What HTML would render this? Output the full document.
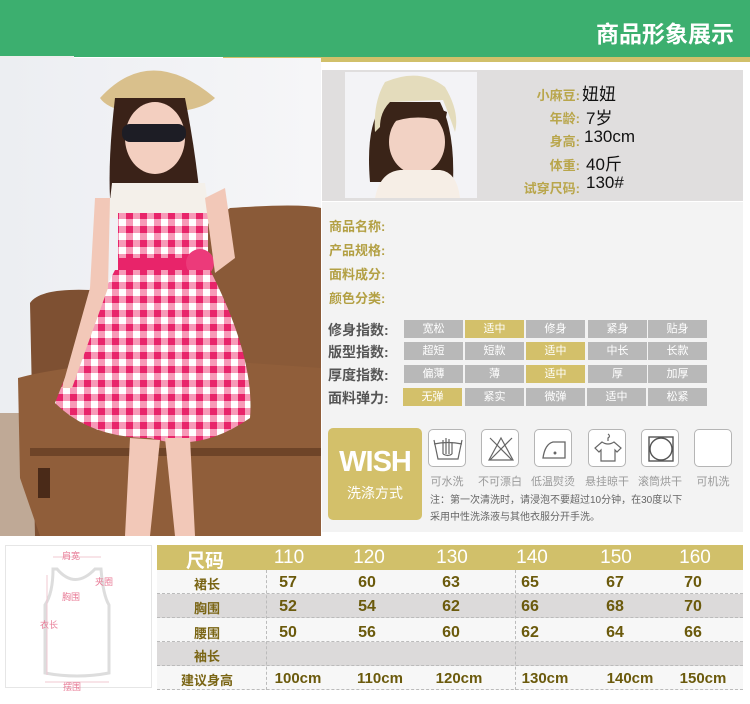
<!DOCTYPE html>
<html><head><meta charset="utf-8"><style>
*{margin:0;padding:0;box-sizing:border-box}
body{width:750px;height:704px;position:relative;background:#fff;font-family:"Liberation Sans","Noto Sans CJK SC",sans-serif;overflow:hidden}
.a{position:absolute}
.lbl{color:#b9a64c;font-weight:bold;font-size:13px;text-align:right;width:92px;left:488px}
.val{color:#111;font-size:17px;left:582px}
.pl{color:#b3a044;font-weight:bold;font-size:13px;left:329px}
.il{color:#555;font-weight:bold;font-size:14px;left:328px}
.c{height:18px;width:59px;background:#b8b8b8;color:#fff;font-size:11px;text-align:center;line-height:18px}
.c.g{background:#d3c06a}
.ic{width:38px;height:38px;border:1px solid #b5b5b5;border-radius:5px;background:#fff;top:429px}
.wl{top:473px;font-size:11px;color:#9a9a9a;width:56px;text-align:center}
.row{left:157px;width:586px;height:24px}
.rl{color:#7a6514;font-weight:bold;font-size:13px;width:100px;text-align:center;left:157px}
.rv{color:#6b5a0c;font-weight:bold;font-size:16px;width:60px;text-align:center}
.dash{border-bottom:1px dashed #bbb}
.pk{color:#e87b96;font-size:9px}
</style></head><body>
<div class="a" style="left:0;top:0;width:750px;height:57px;background:#3caf6f"></div>
<div class="a" style="left:596px;top:15px;font-size:23px;font-weight:bold;color:#fff">商品形象展示</div>
<div class="a" style="left:0;top:56px;width:74px;height:2px;background:#eee"></div>
<div class="a" style="left:223px;top:57px;width:527px;height:5px;background:#d1c06a"></div>

<svg class="a" style="left:0;top:58px" width="321" height="478" viewBox="0 0 321 478">
<defs>
<pattern id="ck" width="14" height="14" patternUnits="userSpaceOnUse"><rect width="14" height="14" fill="#fff"/><rect width="7" height="14" fill="#f79ab8"/><rect width="14" height="7" fill="#f79ab8"/><rect width="7" height="7" fill="#e8246a"/></pattern>
<linearGradient id="bg" x1="0" x2="1"><stop offset="0" stop-color="#eceef2"/><stop offset="1" stop-color="#f6f6f8"/></linearGradient>
</defs>
<rect width="321" height="478" fill="url(#bg)"/>
<rect x="0" y="355" width="321" height="123" fill="#bfa996"/>
<path d="M230 150 Q300 145 321 150 L321 478 L160 478 L160 200 Z" fill="#8a5a38"/>
<path d="M30 245 Q40 230 90 232 L160 240 L160 478 L35 478 Z" fill="#7e5032"/>
<path d="M18 320 Q90 300 250 305 L321 310 L321 478 L40 478 L20 420 Z" fill="#905e3a"/>
<rect x="30" y="390" width="291" height="8" fill="#6e4428"/>
<rect x="38" y="410" width="12" height="30" fill="#4a2a18"/>
<path d="M100 40 Q150 -15 215 40 Q200 55 150 55 Q110 55 100 40Z" fill="#d9c08c"/>
<path d="M115 40 Q108 100 110 140 L200 140 Q195 90 185 40Z" fill="#3a2218"/>
<ellipse cx="155" cy="80" rx="30" ry="36" fill="#f3cfc0"/>
<rect x="122" y="66" width="64" height="18" rx="8" fill="#1d1d25"/>
<path d="M112 125 L205 125 L210 160 L108 160Z" fill="#f4f0ea"/>
<rect x="118" y="155" width="90" height="50" fill="url(#ck)"/>
<rect x="118" y="200" width="92" height="14" fill="#e8246a"/>
<circle cx="200" cy="205" r="14" fill="#ec3a7a"/>
<path d="M115 212 L210 212 Q255 300 250 360 Q200 395 150 380 Q90 380 55 345 Q80 280 115 212Z" fill="url(#ck)"/>
<path d="M130 380 L125 478 L150 478 L160 382Z M165 380 L175 478 L195 478 L190 380Z" fill="#f2c8b8"/>
<path d="M95 140 L110 140 L108 230 L72 330 L62 330 L90 230Z" fill="#f2c8b8"/>
<path d="M205 140 L225 130 L235 200 L215 215Z" fill="#f2c8b8"/>
</svg>

<div class="a" style="left:322px;top:70px;width:421px;height:131px;background:#e0dede"></div>
<svg class="a" style="left:345px;top:72px" width="132" height="126" viewBox="0 0 132 126">
<rect width="132" height="126" fill="#f3f3f6"/>
<path d="M25 110 Q20 50 40 30 L95 30 Q110 60 108 110Z" fill="#3a2418"/>
<ellipse cx="72" cy="70" rx="28" ry="32" fill="#f2d2c4"/>
<path d="M35 55 Q35 40 45 30 L98 28 Q105 45 110 60 Q115 40 100 15 Q75 -5 40 10 Q28 30 30 60Z" fill="#e4dcbc"/>
<path d="M40 40 Q70 25 102 40 L100 50 Q70 40 42 52Z" fill="#3a2418"/>
<path d="M30 126 Q35 100 55 98 L95 98 Q112 100 115 126Z" fill="#f6eee6"/>
</svg>
<div class="a lbl" style="top:85px">小麻豆:</div><div class="a val" style="top:80px">妞妞</div>
<div class="a lbl" style="top:108px">年龄:</div><div class="a val" style="top:104px;left:586px">7岁</div>
<div class="a lbl" style="top:131px">身高:</div><div class="a val" style="top:127px;left:584px">130cm</div>
<div class="a lbl" style="top:155px">体重:</div><div class="a val" style="top:150px;left:586px">40斤</div>
<div class="a lbl" style="top:178px">试穿尺码:</div><div class="a val" style="top:173px;left:586px">130#</div>

<div class="a" style="left:322px;top:202px;width:421px;height:330px;background:#f3f3f3"></div>
<div class="a pl" style="top:216px">商品名称:</div>
<div class="a pl" style="top:240px">产品规格:</div>
<div class="a pl" style="top:264px">面料成分:</div>
<div class="a pl" style="top:288px">颜色分类:</div>

<div class="a il" style="top:320px">修身指数:</div>
<div class="a il" style="top:342px">版型指数:</div>
<div class="a il" style="top:365px">厚度指数:</div>
<div class="a il" style="top:388px">面料弹力:</div>

<div class="a c" style="left:404px;top:320px">宽松</div><div class="a c g" style="left:465px;top:320px">适中</div><div class="a c" style="left:526px;top:320px">修身</div><div class="a c" style="left:588px;top:320px">紧身</div><div class="a c" style="left:648px;top:320px">贴身</div>
<div class="a c" style="left:404px;top:342px">超短</div><div class="a c" style="left:465px;top:342px">短款</div><div class="a c g" style="left:526px;top:342px">适中</div><div class="a c" style="left:588px;top:342px">中长</div><div class="a c" style="left:648px;top:342px">长款</div>
<div class="a c" style="left:404px;top:365px">偏薄</div><div class="a c" style="left:465px;top:365px">薄</div><div class="a c g" style="left:526px;top:365px">适中</div><div class="a c" style="left:588px;top:365px">厚</div><div class="a c" style="left:648px;top:365px">加厚</div>
<div class="a c g" style="left:403px;top:388px">无弹</div><div class="a c" style="left:465px;top:388px">紧实</div><div class="a c" style="left:526px;top:388px">微弹</div><div class="a c" style="left:587px;top:388px">适中</div><div class="a c" style="left:648px;top:388px">松紧</div>

<div class="a" style="left:328px;top:428px;width:94px;height:92px;background:#d3c06a;border-radius:5px"></div>
<div class="a" style="left:328px;top:446px;width:94px;text-align:center;color:#fff;font-weight:bold;font-size:29px;letter-spacing:-1px">WISH</div>
<div class="a" style="left:328px;top:483px;width:94px;text-align:center;color:#fff;font-size:14px">洗涤方式</div>

<div class="a ic" style="left:428px"><svg width="38" height="38" viewBox="0 0 38 38" fill="none" stroke="#666" stroke-width="1.2"><path d="M5 10 L9 29 L29 29 L33 10 M5 14 Q19 11 33 14"/><path d="M14 24 L14 10 M17 24 L17 8 M20 24 L20 9 M23 24 L23 12 M14 24 Q19 27 23 24"/></svg></div>
<div class="a ic" style="left:481px"><svg width="38" height="38" viewBox="0 0 38 38" fill="none" stroke="#666" stroke-width="1.2"><path d="M19 8 L31 30 L7 30Z M8 8 L30 30 M30 8 L8 30"/></svg></div>
<div class="a ic" style="left:534px"><svg width="38" height="38" viewBox="0 0 38 38" fill="none" stroke="#666" stroke-width="1.3"><path d="M8 28 L30 28 L30 12 L18 12 Q10 14 8 28Z"/><circle cx="20" cy="23" r="0.8" fill="#666"/></svg></div>
<div class="a ic" style="left:588px"><svg width="38" height="38" viewBox="0 0 38 38" fill="none" stroke="#666" stroke-width="1.2"><path d="M19 4 Q22 6 19 8 L19 11 M13 12 L6 18 L10 22 L12 20 L12 31 L26 31 L26 20 L28 22 L32 18 L25 12 Q19 16 13 12Z"/></svg></div>
<div class="a ic" style="left:641px"><svg width="38" height="38" viewBox="0 0 38 38" fill="none" stroke="#555" stroke-width="1.4"><rect x="7" y="7" width="24" height="24"/><circle cx="19" cy="19" r="11"/></svg></div>
<div class="a ic" style="left:694px"></div>
<div class="a wl" style="left:419px">可水洗</div>
<div class="a wl" style="left:472px">不可漂白</div>
<div class="a wl" style="left:525px">低温熨烫</div>
<div class="a wl" style="left:579px">悬挂晾干</div>
<div class="a wl" style="left:632px">滚筒烘干</div>
<div class="a wl" style="left:685px">可机洗</div>
<div class="a" style="left:430px;top:492px;font-size:10px;color:#666;line-height:17px">注：第一次清洗时，请浸泡不要超过10分钟，在30度以下<br>采用中性洗涤液与其他衣服分开手洗。</div>

<div class="a" style="left:5px;top:545px;width:147px;height:143px;background:#fff;border:1px solid #e6e6e6"></div>
<svg class="a" style="left:5px;top:545px" width="147" height="143" viewBox="0 0 147 143">
<path d="M52 24 Q70 45 90 24 L96 24 Q98 50 104 60 L104 128 Q72 134 40 128 L40 60 Q48 48 48 24Z" fill="none" stroke="#ddd" stroke-width="3"/>
<path d="M48 12 L96 12 M42 30 L42 130 M40 137 L104 137" stroke="#f0c8d2" stroke-width="1"/>
</svg>
<div class="a pk" style="left:62px;top:549px">肩宽</div>
<div class="a pk" style="left:95px;top:575px">夹圈</div>
<div class="a pk" style="left:62px;top:590px">胸围</div>
<div class="a pk" style="left:40px;top:618px">衣长</div>
<div class="a pk" style="left:63px;top:680px">摆围</div>

<div class="a" style="left:157px;top:545px;width:586px;height:25px;background:#d1c06a"></div>
<div class="a" style="left:186px;top:546px;color:#fff;font-weight:bold;font-size:19px">尺码</div>
<div class="a row dash" style="top:570px;background:#f7f7f7"></div>
<div class="a row dash" style="top:594px;background:#dcdada"></div>
<div class="a row dash" style="top:618px;background:#f7f7f7"></div>
<div class="a row dash" style="top:642px;background:#dcdada"></div>
<div class="a row dash" style="top:666px;background:#f7f7f7"></div>
<div class="a" style="left:266px;top:570px;height:120px;border-left:1px dashed #bbb"></div>
<div class="a" style="left:515px;top:570px;height:120px;border-left:1px dashed #bbb"></div>

<div class="a rl" style="top:574px">裙长</div>
<div class="a rl" style="top:598px">胸围</div>
<div class="a rl" style="top:623px">腰围</div>
<div class="a rl" style="top:646px">袖长</div>
<div class="a rl" style="top:670px">建议身高</div>

<div class="a" style="left:259px;top:547px;width:480px;color:#fff;font-size:19px">
<span class="a" style="left:0;width:60px;text-align:center">110</span><span class="a" style="left:80px;width:60px;text-align:center">120</span><span class="a" style="left:163px;width:60px;text-align:center">130</span><span class="a" style="left:243px;width:60px;text-align:center">140</span><span class="a" style="left:327px;width:60px;text-align:center">150</span><span class="a" style="left:406px;width:60px;text-align:center">160</span></div>

<div class="a rv" style="left:258px;top:574px">57</div><div class="a rv" style="left:337px;top:574px">60</div><div class="a rv" style="left:421px;top:574px">63</div><div class="a rv" style="left:500px;top:574px">65</div><div class="a rv" style="left:585px;top:574px">67</div><div class="a rv" style="left:663px;top:574px">70</div>
<div class="a rv" style="left:258px;top:598px">52</div><div class="a rv" style="left:337px;top:598px">54</div><div class="a rv" style="left:421px;top:598px">62</div><div class="a rv" style="left:500px;top:598px">66</div><div class="a rv" style="left:585px;top:598px">68</div><div class="a rv" style="left:663px;top:598px">70</div>
<div class="a rv" style="left:258px;top:624px">50</div><div class="a rv" style="left:337px;top:624px">56</div><div class="a rv" style="left:421px;top:624px">60</div><div class="a rv" style="left:500px;top:624px">62</div><div class="a rv" style="left:585px;top:624px">64</div><div class="a rv" style="left:663px;top:624px">66</div>
<div class="a rv" style="left:268px;top:670px;font-size:15px">100cm</div><div class="a rv" style="left:350px;top:670px;font-size:15px">110cm</div><div class="a rv" style="left:429px;top:670px;font-size:15px">120cm</div><div class="a rv" style="left:515px;top:670px;font-size:15px">130cm</div><div class="a rv" style="left:600px;top:670px;font-size:15px">140cm</div><div class="a rv" style="left:673px;top:670px;font-size:15px">150cm</div>
</body></html>
